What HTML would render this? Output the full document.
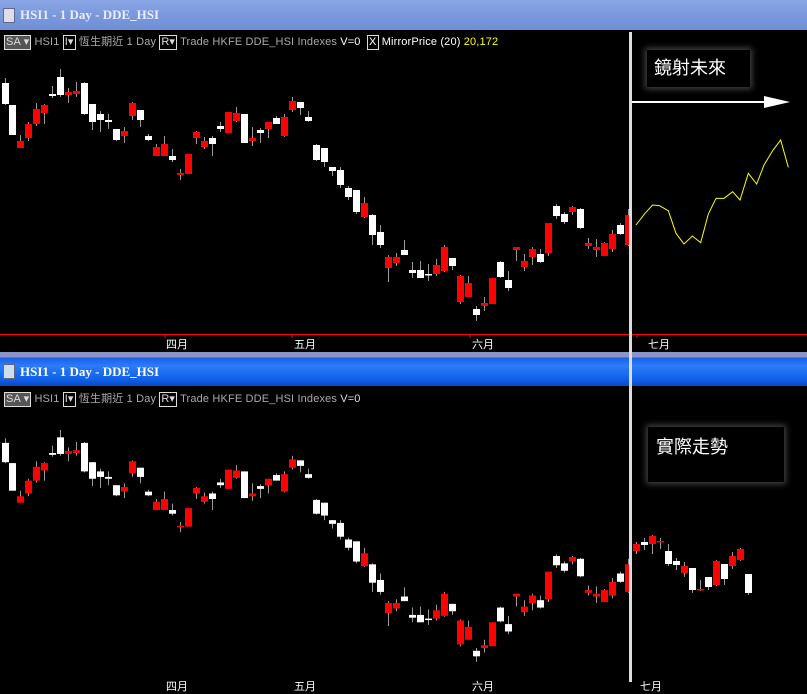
<!DOCTYPE html>
<html><head><meta charset="utf-8"><style>
body{margin:0;width:807px;height:693px;background:#000;overflow:hidden;position:relative;font-family:"Liberation Sans","Noto Sans CJK TC",sans-serif}
.t1{position:absolute;left:0;top:0;width:807px;height:30px;background:linear-gradient(#8aa6e6,#7b98dc 50%,#6f8fd6)}
.t2{position:absolute;left:0;top:352px;width:807px;height:34px;background:linear-gradient(#8c95c8 0,#8c95c8 5px,#1c5fe8 6px,#2a7cf8 40%,#1060e8 80%,#0a48c8)}
.tt{position:absolute;font:bold 13px "Liberation Serif",serif;color:#fff}
.tb{position:absolute;left:4px;font-size:11px;letter-spacing:0.15px;color:#aaa;white-space:nowrap}
.bx{display:inline-block;border:1px solid #ddd;color:#ddd;padding:0 1px;line-height:13px}
.lbl{position:absolute;color:#fff;font-size:11px}
.box{position:absolute;background:#000;box-shadow:0 0 6px 2px #444;color:#fff;font-size:18px}
</style></head><body>
<div class="t1"></div>
<div class="tt" style="left:20px;top:7px;color:#e8eeff">HSI1 - 1 Day - DDE_HSI</div>
<div style="position:absolute;left:3px;top:8px;width:10px;height:13px;background:#dde;border:1px solid #668"></div>
<div class="tb" style="top:33px"><span class="bx" style="background:#555">SA ▾</span> HSI1 <span class="bx">I▾</span> 恆生期近 1 Day <span class="bx">R▾</span> Trade HKFE DDE_HSI Indexes <span style="color:#fff">V=0</span> &nbsp;<span class="bx" style="color:#fff">X</span> <span style="color:#fff">MirrorPrice (20)</span> <span style="color:#ff0">20,172</span></div>
<div class="t2"></div>
<div class="tt" style="left:20px;top:364px">HSI1 - 1 Day - DDE_HSI</div>
<div style="position:absolute;left:3px;top:364px;width:10px;height:13px;background:#cde;border:1px solid #668"></div>
<div class="tb" style="top:390px"><span class="bx" style="background:#555">SA ▾</span> HSI1 <span class="bx">I▾</span> 恆生期近 1 Day <span class="bx">R▾</span> Trade HKFE DDE_HSI Indexes <span style="color:#ddd">V=0</span></div>
<svg id="s" width="807" height="693" style="position:absolute;left:0;top:0"></svg>
<div class="lbl" style="left:166px;top:336px">四月</div><div class="lbl" style="left:294px;top:336px">五月</div><div class="lbl" style="left:472px;top:336px">六月</div><div class="lbl" style="left:648px;top:336px">七月</div>
<div class="lbl" style="left:166px;top:678px">四月</div><div class="lbl" style="left:294px;top:678px">五月</div><div class="lbl" style="left:472px;top:678px">六月</div><div class="lbl" style="left:640px;top:678px">七月</div>
<div class="box" style="left:647px;top:50px;width:103px;height:37px;line-height:37px;text-indent:7px">鏡射未來</div>
<div class="box" style="left:648px;top:427px;width:136px;height:55px;line-height:40px;text-indent:8px">實際走勢</div>
<script>
var C=[[5,'W',83,104,78,105],[12,'W',105,135,105,135],[20,'R',141,148,135,148],[28,'R',124,138,122,141],[36,'R',109,124,103,126],[44,'R',105,113,104,124],[52,'W',94,96,86,98],[60,'W',77,95,69,97],[68,'R',92,95,88,103],[76,'R',91,94,82,97],[84,'W',83,114,82,115],[92,'W',104,122,104,130],[100,'W',114,120,111,132],[108,'W',120,122,114,129],[116,'W',129,140,129,141],[124,'R',131,136,127,143],[132,'R',103,116,102,120],[140,'W',110,120,110,127],[148,'W',136,140,134,141],[156,'R',147,156,144,156],[164,'R',144,156,136,156],[172,'W',156,160,149,162],[180,'R',173,175,169,180],[188,'R',154,174,154,174],[196,'R',132,138,131,144],[204,'R',141,147,137,149],[212,'W',138,144,136,156],[220,'W',126,129,122,132],[228,'R',112,133,112,133],[236,'R',113,121,107,122],[244,'W',114,143,114,143],[252,'R',138,141,127,146],[260,'W',130,133,128,143],[268,'R',122,129,122,138],[276,'W',118,124,116,124],[284,'R',117,136,114,137],[292,'R',101,110,97,112],[300,'W',102,108,102,115],[308,'W',117,121,111,122],[316,'W',145,160,144,161],[324,'W',148,162,148,167],[332,'W',167,171,167,176],[340,'W',170,185,167,188],[348,'W',188,197,186,200],[356,'W',190,212,190,214],[364,'R',203,217,197,218],[372,'W',215,235,214,245],[380,'W',232,245,225,248],[388,'R',257,268,255,282],[396,'R',257,263,253,266],[404,'W',250,255,240,255],[412,'W',270,273,262,278],[420,'W',270,278,261,278],[428,'W',274,275,264,281],[436,'R',265,274,259,276],[444,'R',247,271,245,272],[452,'W',258,266,258,270],[460,'R',276,302,275,304],[468,'R',283,297,276,297],[476,'W',309,315,306,321],[484,'R',303,306,297,311],[492,'R',278,304,278,304],[500,'W',262,277,261,278],[508,'W',280,288,271,291],[516,'R',247,250,247,261],[524,'R',261,267,254,271],[532,'R',249,257,247,265],[540,'W',254,262,249,263],[548,'R',223,253,223,256],[556,'W',206,216,204,219],[564,'W',214,222,212,224],[572,'R',207,212,206,215],[580,'W',209,228,208,229],[588,'R',243,246,238,249],[596,'R',247,250,239,257],[604,'R',243,256,242,256],[612,'R',234,249,230,252],[620,'W',225,234,223,235],[628,'R',215,245,209,246]];
var E=[[636,'R',544,551,542,554],[644,'W',542,545,538,550],[652,'R',536,544,535,554],[660,'R',541,542,538,549],[668,'W',551,564,544,566],[676,'W',561,565,558,570],[684,'R',566,573,562,577],[692,'W',568,590,568,593],[700,'R',589,590,580,591],[708,'W',577,587,577,590],[716,'R',561,585,560,586],[724,'W',564,579,564,585],[732,'R',556,566,552,569],[740,'R',549,560,548,561],[748,'W',574,593,574,595]];
var s='';
function cd(c,f){var x=c[0],col=c[1]=='W'?'#fff':'#f00',a=f(c[2]),b=f(c[3]),w1=f(c[4]),w2=f(c[5]);
s+='<line x1="'+(x+.5)+'" x2="'+(x+.5)+'" y1="'+w1+'" y2="'+w2+'" stroke="#999"/>';
s+='<rect x="'+(x-3)+'" y="'+a+'" width="7" height="'+Math.max(b-a,1.5)+'" fill="'+col+'"/>';}
C.forEach(function(c){cd(c,function(y){return y})});
C.forEach(function(c){cd(c,function(y){return 430+(y-69)*0.92})});
E.forEach(function(c){cd(c,function(y){return y})});
s+='<line x1="0" x2="807" y1="334.5" y2="334.5" stroke="#f00"/>';
[165,292,470,637].forEach(function(x){s+='<line x1="'+x+'" x2="'+x+'" y1="334" y2="338" stroke="#f00"/>'});
var Y=[[48,555],[75,520],[98,495],[118,497],[145,512],[168,580],[192,612],[217,588],[242,608],[265,522],[288,475],[312,475],[338,455],[360,480],[385,400],[410,432],[432,375],[458,332],[482,300],[505,382]];
s+='<polyline fill="none" stroke="#ff0" stroke-width="1" points="'+Y.map(function(p){return (620+p[0]/3)+','+(40+p[1]/3)}).join(' ')+'"/>';
s+='<rect x="629" y="32" width="3" height="650" fill="#ddd"/>';
s+='<line x1="632" x2="770" y1="102" y2="102" stroke="#fff" stroke-width="2"/><polygon points="764,96 790,102 764,108" fill="#fff"/>';
document.getElementById('s').innerHTML=s;
</script>
</body></html>
